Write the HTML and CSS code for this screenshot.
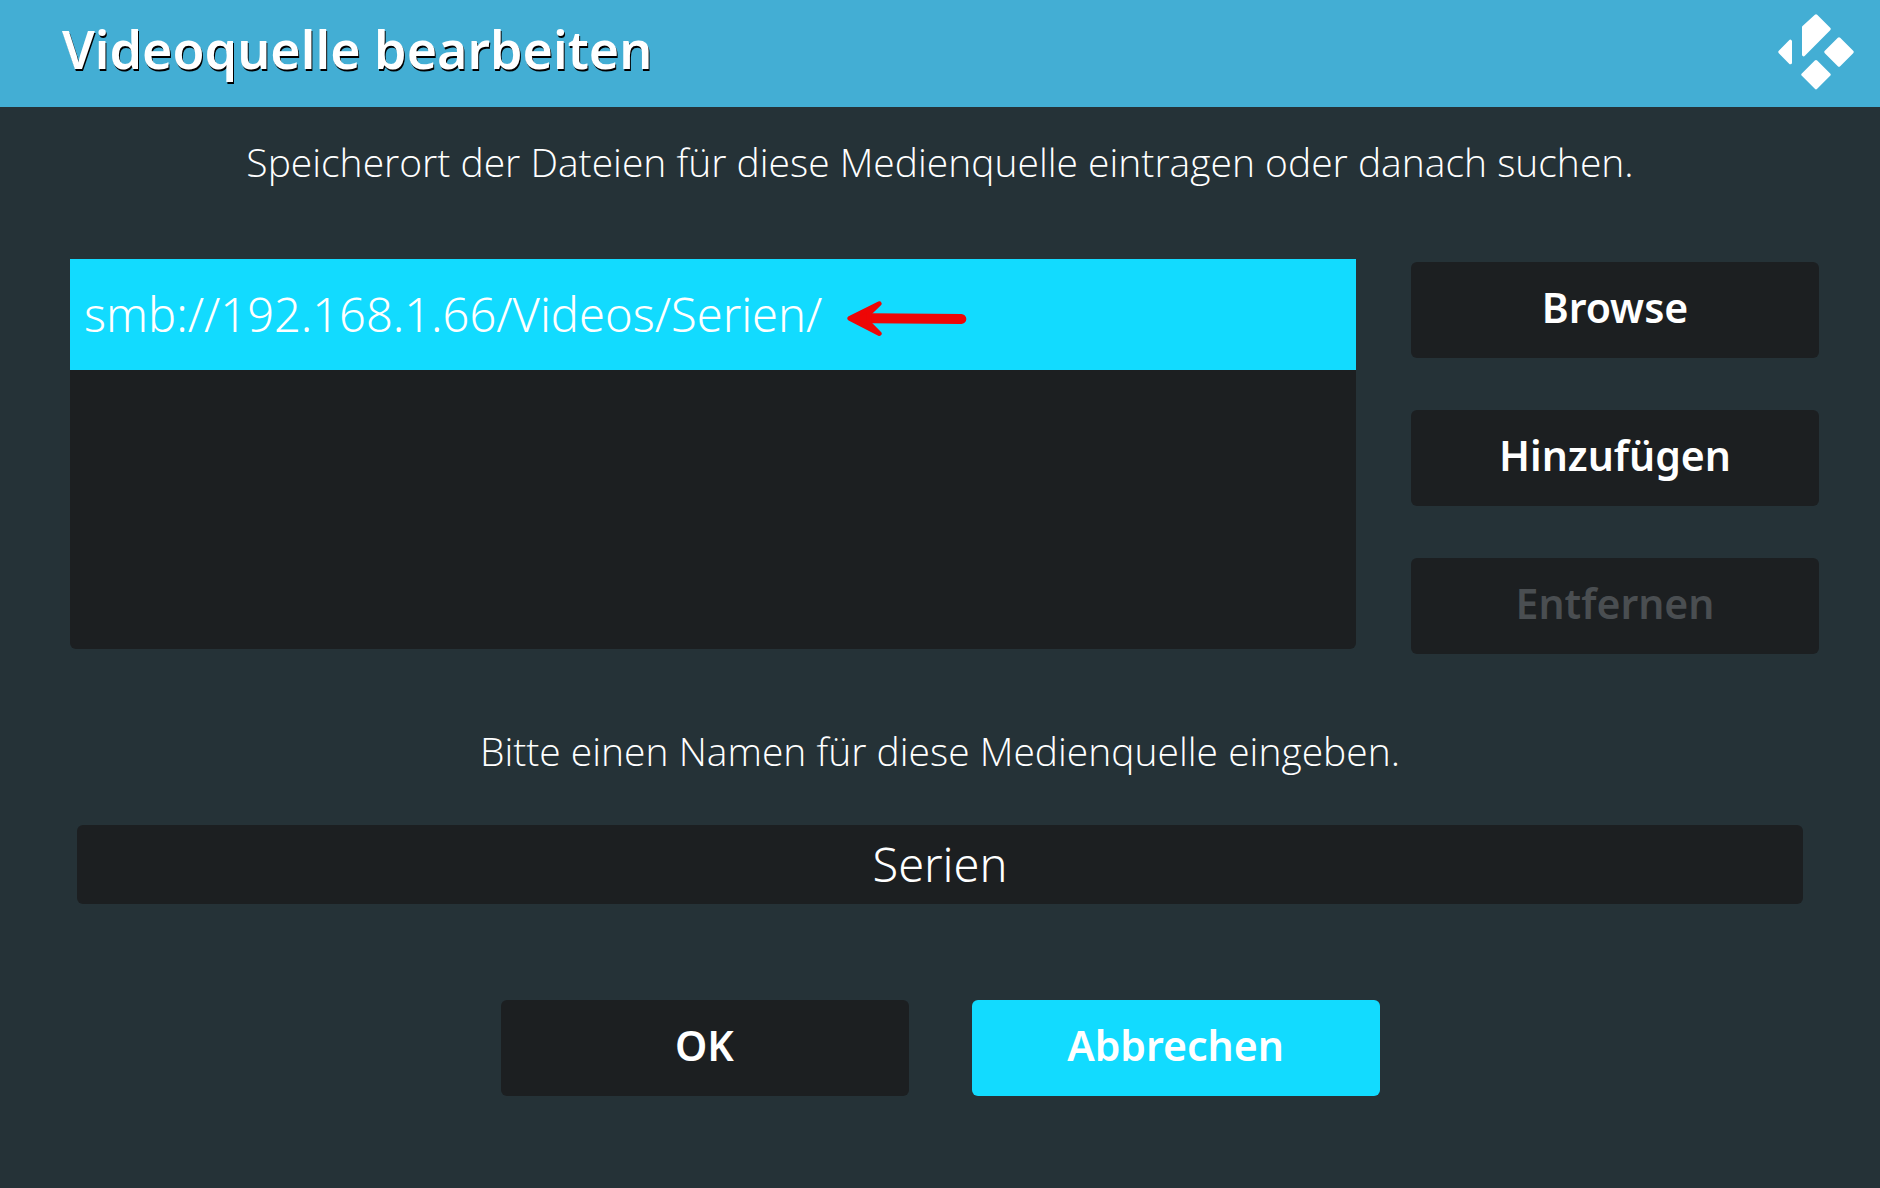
FILE: index.html
```html
<!DOCTYPE html>
<html lang="de">
<head>
  <meta charset="utf-8">
  <title>Videoquelle bearbeiten</title>
  <link rel="stylesheet" href="styles.css">
</head>
<body>
  <header class="titlebar">
    <h1 class="title">Videoquelle bearbeiten</h1>
    <svg class="logo" viewBox="0 0 228 228" role="img" aria-label="Kodi">
      <path d="M114 6 153 45 77 122V40Z"/>
      <path d="M6 114 37 82V146Z"/>
      <path d="M183 75 222 114 183 153 144 114Z"/>
      <path d="M114 143 153 182 114 221 75 182Z"/>
    </svg>
  </header>

  <main>
    <form class="source">
      <p class="prompt">Speicherort der Dateien für diese Medienquelle eintragen oder danach suchen.</p>

      <div class="locations">
        <ul class="paths">
          <li class="path selected">
            <span>smb://192.168.1.66/Videos/Serien/</span>
            <svg class="arrow" viewBox="0 0 360 108" aria-hidden="true">
              <path class="shaft" d="M343 54 70 52"/>
              <path class="head" d="M8 52 97 8 66 38V66L97 98Z"/>
            </svg>
          </li>
        </ul>
        <div class="actions">
          <button class="btn" type="button">Browse</button>
          <button class="btn" type="button">Hinzufügen</button>
          <button class="btn" type="button" disabled>Entfernen</button>
        </div>
      </div>

      <label class="prompt" for="source-name">Bitte einen Namen für diese Medienquelle eingeben.</label>
      <div class="field">
        <input class="name" id="source-name" type="text" value="Serien">
      </div>

      <div class="confirm">
        <button class="btn" type="submit">OK</button>
        <button class="btn focused" type="button">Abbrechen</button>
      </div>
    </form>
  </main>
</body>
</html>
```
FILE: styles.css
```css
* {
  box-sizing: border-box;
}

body {
  margin: 0;
  min-height: 100vh;
  background: #253237;
  color: #fff;
  font-family: "Noto Sans", "Open Sans", sans-serif;
  font-weight: 300;
}

.titlebar {
  display: flex;
  align-items: center;
  justify-content: space-between;
  padding: 14px 26px 17px 62px;
  background: #43aed4;
}

.title {
  margin: 0;
  padding-bottom: 6px;
  font-size: 52px;
  font-weight: 600;
  line-height: 70px;
  text-shadow: 1px 2px 0 #000;
}

.logo {
  width: 76px;
  height: 76px;
  fill: #fff;
  stroke: #fff;
  stroke-width: 10;
  stroke-linejoin: round;
}

.source {
  display: flex;
  flex-direction: column;
  padding: 28px 0 92px;
}

.prompt {
  margin: 0;
  font-family: "Open Sans", "Noto Sans", sans-serif;
  font-size: 39px;
  line-height: 54px;
  text-align: center;
}

.locations {
  display: grid;
  grid-template-columns: 1fr 408px;
  gap: 55px;
  align-items: start;
  margin: 70px 61px 70px 70px;
}

.paths {
  min-height: 390px;
  margin: 0;
  padding: 0;
  list-style: none;
  background: #1c1f21;
  border-radius: 0 0 6px 6px;
}

.path {
  display: flex;
  align-items: center;
  gap: 25px;
  padding: 23px 14px 24px;
  font-size: 47px;
  line-height: 64px;
}

.path.selected {
  background: #12dbff;
}

.arrow {
  width: 120px;
  height: 36px;
  margin-top: 10px;
}

.shaft {
  stroke: #ee0606;
  stroke-width: 30;
  stroke-linecap: round;
}

.head {
  fill: #ee0606;
  stroke: #ee0606;
  stroke-width: 14;
  stroke-linejoin: round;
}

.actions {
  display: grid;
  gap: 52px;
  padding-top: 3px;
}

.btn {
  height: 96px;
  padding: 0 16px 6px;
  border: 0;
  border-radius: 6px;
  background: #1c1f21;
  color: #fff;
  font-family: inherit;
  font-size: 41px;
  font-weight: 600;
}

.btn:disabled {
  color: #4a4e51;
}

.btn.focused {
  background: #12dbff;
}

.field {
  display: flex;
  margin: 47px 77px 96px;
}

.name {
  flex: 1;
  height: 79px;
  padding: 0 16px 2px;
  border: 0;
  border-radius: 6px;
  background: #1c1f21;
  color: #fff;
  font-family: inherit;
  font-size: 47px;
  font-weight: 300;
  text-align: center;
}

.confirm {
  display: grid;
  grid-template-columns: 408px 408px;
  justify-content: center;
  gap: 63px;
}
```
